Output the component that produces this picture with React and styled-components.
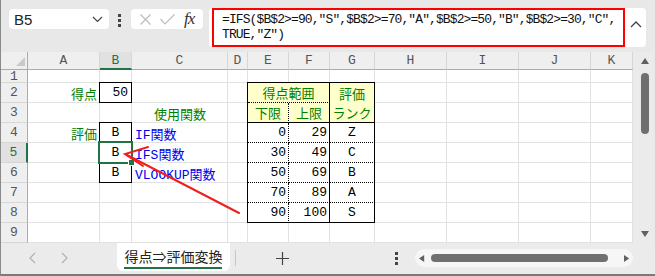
import React from "react";
import styled, { createGlobalStyle, css } from "styled-components";

const GREEN = "#008000";
const BLUE = "#0000f0";
const SEL = "#217346";

const COLS = [
  { name: "A", w: 72 },
  { name: "B", w: 32 },
  { name: "C", w: 96 },
  { name: "D", w: 20 },
  { name: "E", w: 41 },
  { name: "F", w: 41 },
  { name: "G", w: 45 },
  { name: "H", w: 72 },
  { name: "I", w: 72 },
  { name: "J", w: 72 },
  { name: "K", w: 42 },
];
const ROWS = [1, 2, 3, 4, 5, 6, 7, 8, 9];

const FORMULA_1 = '=IFS($B$2>=90,"S",$B$2>=70,"A",$B$2>=50,"B",$B$2>=30,"C",';
const FORMULA_2 = 'TRUE,"Z")';

const RANKS = [
  ["0", "29", "Z"],
  ["30", "49", "C"],
  ["50", "69", "B"],
  ["70", "89", "A"],
  ["90", "100", "S"],
];

const GlobalStyle = createGlobalStyle`
  html, body {
    margin: 0;
    padding: 0;
    background: #fff;
  }
  * {
    box-sizing: border-box;
  }
`;

const Frame = styled.div`
  position: relative;
  width: 655px;
  height: 276px;
  display: flex;
  flex-direction: column;
  background: #e8e8e8;
  border-left: 1px solid #8a8a8a;
  border-bottom: 2px solid #7a7a7a;
  font-family: "Liberation Sans", "Noto Sans CJK JP", sans-serif;
  overflow: hidden;
`;

const FormulaBar = styled.div`
  display: flex;
  align-items: flex-start;
  height: 52px;
  padding: 8px 0 0 8px;
`;

const NameBox = styled.div`
  display: flex;
  align-items: center;
  justify-content: space-between;
  width: 100px;
  height: 20px;
  margin-top: 1px;
  padding: 0 6px 0 5px;
  background: #fff;
  border-radius: 4px;
  font-size: 15px;
  color: #222;
`;

const Kebab = styled.div`
  display: flex;
  flex-direction: column;
  gap: 2px;
  margin: 6px 0 0 9px;

  span {
    width: 3px;
    height: 3px;
    background: #444;
  }
`;

const EditBox = styled.div`
  display: flex;
  align-items: center;
  gap: 9px;
  width: 72px;
  height: 20px;
  margin: 1px 0 0 10px;
  padding: 0 5px 0 9px;
  background: #fff;
  border-radius: 4px;
`;

const Fx = styled.span`
  font-family: "Liberation Serif", serif;
  font-style: italic;
  font-size: 17px;
  color: #333;
  letter-spacing: -1px;
`;

const FormulaPanel = styled.div`
  display: flex;
  align-items: flex-start;
  width: 437px;
  height: 39px;
  margin-left: 6px;
  padding-left: 3px;
  background: #fff;
  border-radius: 4px;
`;

const FormulaText = styled.div`
  width: 413px;
  height: 39px;
  padding: 2px 0 0 8px;
  border: 2px solid #ff0000;
  font-family: "Liberation Mono", monospace;
  font-size: 13px;
  letter-spacing: -0.9px;
  line-height: 15px;
  color: #111;
  white-space: pre;
`;

const Collapse = styled.div`
  margin: 6px 0 0 5px;
`;

const SheetArea = styled.div`
  display: flex;
  height: 191px;
`;

const Grid = styled.div`
  display: grid;
  grid-template-columns: 27px ${COLS.map((c) => `${c.w}px`).join(" ")};
  grid-template-rows: 18px 13px repeat(8, 20px);
  background: #fff;
  font-family: "Liberation Mono", "Noto Sans CJK JP", monospace;
  font-size: 13px;
`;

const Corner = styled.div`
  grid-column: 1;
  grid-row: 1;
  display: flex;
  align-items: flex-end;
  justify-content: flex-end;
  padding: 0 2px 3px 0;
  background: #efefef;
  border-right: 1px solid #ababab;
  border-bottom: 1px solid #ababab;
`;

const ColHead = styled.div`
  grid-column: ${(p) => p.$c};
  grid-row: 1;
  display: flex;
  align-items: center;
  justify-content: center;
  background: ${(p) => (p.$active ? "#e1e1e1" : "#efefef")};
  color: ${(p) => (p.$active ? SEL : "#555")};
  border-right: 1px solid #d6d6d6;
  border-bottom: ${(p) => (p.$active ? `2px solid ${SEL}` : "1px solid #ababab")};
  overflow: hidden;
`;

const RowHead = styled.div`
  grid-column: 1;
  grid-row: ${(p) => p.$r};
  display: flex;
  align-items: center;
  justify-content: center;
  background: ${(p) => (p.$active ? "#e1e1e1" : "#efefef")};
  color: ${(p) => (p.$active ? SEL : "#555")};
  border-bottom: 1px solid #d6d6d6;
  border-right: ${(p) => (p.$active ? `2px solid ${SEL}` : "1px solid #ababab")};
  overflow: hidden;
`;

const Cell = styled.div`
  grid-column: ${(p) => p.$c};
  grid-row: ${(p) => p.$r};
  border-right: 1px solid #e1e1e1;
  border-bottom: 1px solid #e1e1e1;
`;

const Value = styled.div`
  grid-column: ${(p) => p.$c};
  grid-row: ${(p) => p.$r};
  display: flex;
  align-items: center;
  justify-content: ${(p) =>
    p.$align === "right" ? "flex-end" : p.$align === "center" ? "center" : "flex-start"};
  padding: 0 3px;
  color: ${(p) => p.$color || "#000"};
  white-space: nowrap;
  ${(p) =>
    p.$boxed &&
    css`
      margin: -1px 0 0 -1px;
      border: 1px solid #000;
    `}
`;

const Selection = styled.div`
  position: relative;
  grid-column: ${(p) => p.$c};
  grid-row: ${(p) => p.$r};
  margin: -2px -1px -1px -2px;
  border: 2px solid ${SEL};
  display: flex;
  align-items: center;
  justify-content: center;

  &::after {
    content: "";
    position: absolute;
    right: -4px;
    bottom: -4px;
    width: 5px;
    height: 5px;
    background: ${SEL};
    border: 1px solid #fff;
  }
`;

const RangeTable = styled.div`
  grid-column: 6 / 9;
  grid-row: 3 / 10;
  display: grid;
  grid-template-columns: 41px 41px 45px;
  grid-template-rows: repeat(7, 20px);
  margin: -1px 0 0 -1px;
  border-top: 1px solid #000;
  border-left: 1px solid #000;
`;

const TCell = styled.div`
  grid-column: ${(p) => p.$span || "auto"};
  display: flex;
  align-items: center;
  justify-content: ${(p) => (p.$align === "right" ? "flex-end" : "center")};
  padding: 0 2px;
  background: ${(p) => (p.$head ? "#ffffcc" : "#fff")};
  color: ${(p) => (p.$head ? GREEN : "#000")};
  border-right: 1px ${(p) => p.$right || "solid"} #000;
  border-bottom: ${(p) => (p.$bottom === "none" ? "none" : `1px ${p.$bottom || "solid"} #000`)};
`;

const VScroll = styled.div`
  display: flex;
  flex-direction: column;
  align-items: center;
  width: 21px;
  padding: 6px 0 4px 3px;
  background: #ebebeb;
`;

const VThumb = styled.div`
  width: 8px;
  height: 61px;
  margin-top: 7px;
  border-radius: 4px;
  background: #6f6f6f;
`;

const Spacer = styled.div`
  flex: 1;
`;

const TabBar = styled.div`
  display: flex;
  align-items: flex-start;
  height: 31px;
  background: #ebebeb;
`;

const TabNav = styled.div`
  display: flex;
  align-items: center;
  gap: 21px;
  width: 116px;
  height: 30px;
  padding-left: 26px;
`;

const SheetTab = styled.div`
  position: relative;
  display: flex;
  align-items: center;
  justify-content: center;
  width: 113px;
  height: 28px;
  padding-bottom: 3px;
  background: #fff;
  border-radius: 0 0 6px 6px;
  font-family: "Noto Sans CJK JP", sans-serif;
  font-size: 14px;
  color: #222;

  &::after {
    content: "";
    position: absolute;
    left: 7px;
    right: 8px;
    bottom: 2px;
    height: 2px;
    background: ${SEL};
  }
`;

const TabDivider = styled.div`
  width: 1px;
  height: 16px;
  margin: 7px 0 0 5px;
  background: #c6c6c6;
`;

const AddSheet = styled.div`
  display: flex;
  align-items: center;
  justify-content: center;
  width: 92px;
  height: 30px;
`;

const TabKebab = styled.div`
  display: flex;
  flex-direction: column;
  justify-content: center;
  align-items: flex-end;
  gap: 2px;
  width: 87px;
  height: 30px;
  padding-right: 17px;

  span {
    width: 3px;
    height: 3px;
    background: #444;
  }
`;

const HScroll = styled.div`
  display: flex;
  align-items: center;
  width: 218px;
  height: 18px;
  margin-top: 6px;
  padding: 0 2px 0 4px;
  border-radius: 9px;
  background: #f6f6f6;
`;

const HThumb = styled.div`
  width: 179px;
  height: 8px;
  margin: 0 16px 0 5px;
  border-radius: 4px;
  background: #6f6f6f;
`;

const Overlay = styled.svg`
  position: absolute;
  top: 0;
  left: 0;
  pointer-events: none;
`;

const Tri = ({ dir, size = 8, color = "#555" }) => {
  const pts = {
    up: "0,6 4,0 8,6",
    down: "0,0 8,0 4,6",
    left: "6,0 6,8 0,4",
    right: "0,0 0,8 6,4",
  }[dir];
  return (
    <svg width={size} height={size} viewBox="0 0 8 8">
      <polygon points={pts} fill={color} />
    </svg>
  );
};

const App = () => {
  const colStart = (i) => i + 2;
  const rowLine = (r) => r + 1;

  return (
    <>
      <GlobalStyle />
      <Frame>
        <FormulaBar>
          <NameBox>
            <span>B5</span>
            <svg width="11" height="7" viewBox="0 0 11 7">
              <polyline points="1,1 5.5,5.5 10,1" fill="none" stroke="#444" strokeWidth="1.2" />
            </svg>
          </NameBox>
          <Kebab>
            <span />
            <span />
            <span />
          </Kebab>
          <EditBox>
            <svg width="11" height="11" viewBox="0 0 11 11">
              <path d="M0.5 0.5 L10.5 10.5 M10.5 0.5 L0.5 10.5" stroke="#bdbdbd" strokeWidth="1.2" />
            </svg>
            <svg width="15" height="11" viewBox="0 0 15 11">
              <polyline points="0.5,5 5,10 14.5,0.5" fill="none" stroke="#bdbdbd" strokeWidth="1.2" />
            </svg>
            <Fx>fx</Fx>
          </EditBox>
          <FormulaPanel>
            <FormulaText>
              {FORMULA_1}
              {"\n"}
              {FORMULA_2}
            </FormulaText>
            <Collapse>
              <svg width="12" height="7" viewBox="0 0 12 7">
                <polyline points="1,6 6,1 11,6" fill="none" stroke="#444" strokeWidth="1.3" />
              </svg>
            </Collapse>
          </FormulaPanel>
        </FormulaBar>

        <SheetArea>
          <Grid>
            <Corner>
              <svg width="9" height="9" viewBox="0 0 9 9">
                <polygon points="9,0 9,9 0,9" fill="#c9c9c9" />
              </svg>
            </Corner>
            {COLS.map((c, i) => (
              <ColHead key={c.name} $c={colStart(i)} $active={c.name === "B"}>
                {c.name}
              </ColHead>
            ))}
            {ROWS.map((r) => (
              <RowHead key={r} $r={rowLine(r)} $active={r === 5}>
                {r}
              </RowHead>
            ))}
            {ROWS.map((r) =>
              COLS.map((c, i) => <Cell key={`${c.name}${r}`} $c={colStart(i)} $r={rowLine(r)} />)
            )}

            <Value $c={2} $r={3} $align="right" $color={GREEN}>得点</Value>
            <Value $c={3} $r={3} $align="right" $boxed>50</Value>
            <Value $c={4} $r={4} $align="center" $color={GREEN}>使用関数</Value>
            <Value $c={2} $r={5} $align="right" $color={GREEN}>評価</Value>
            <Value $c={3} $r={5} $align="center" $boxed>B</Value>
            <Value $c={3} $r={7} $align="center" $boxed>B</Value>
            <Selection $c={3} $r={6}>B</Selection>
            <Value $c={4} $r={5} $color={BLUE}>IF関数</Value>
            <Value $c={4} $r={6} $color={BLUE}>IFS関数</Value>
            <Value $c={4} $r={7} $color={BLUE}>VLOOKUP関数</Value>

            <RangeTable>
              <TCell $head $span="span 2" $bottom="dotted">得点範囲</TCell>
              <TCell $head $bottom="none">評価</TCell>
              <TCell $head $right="dotted">下限</TCell>
              <TCell $head>上限</TCell>
              <TCell $head>ランク</TCell>
              {RANKS.map(([lo, hi, rank], i) => {
                const bottom = i === RANKS.length - 1 ? "solid" : "dotted";
                return (
                  <React.Fragment key={rank}>
                    <TCell $align="right" $right="dotted" $bottom={bottom}>{lo}</TCell>
                    <TCell $align="right" $bottom={bottom}>{hi}</TCell>
                    <TCell $bottom={bottom}>{rank}</TCell>
                  </React.Fragment>
                );
              })}
            </RangeTable>
          </Grid>

          <VScroll>
            <Tri dir="up" color="#606060" />
            <VThumb />
            <Spacer />
            <Tri dir="down" color="#606060" />
          </VScroll>
        </SheetArea>

        <TabBar>
          <TabNav>
            <svg width="11" height="12" viewBox="0 0 11 12">
              <polyline points="8,1 3,6 8,11" fill="none" stroke="#b0b0b0" strokeWidth="1.2" />
            </svg>
            <svg width="11" height="12" viewBox="0 0 11 12">
              <polyline points="3,1 8,6 3,11" fill="none" stroke="#b0b0b0" strokeWidth="1.2" />
            </svg>
          </TabNav>
          <SheetTab>得点⇒評価変換</SheetTab>
          <TabDivider />
          <AddSheet>
            <svg width="13" height="13" viewBox="0 0 13 13">
              <path d="M6.5 0 V13 M0 6.5 H13" stroke="#444" strokeWidth="1.2" />
            </svg>
          </AddSheet>
          <TabKebab>
            <span />
            <span />
            <span />
          </TabKebab>
          <HScroll>
            <Tri dir="left" size={7} color="#606060" />
            <HThumb />
            <Tri dir="right" size={7} color="#606060" />
          </HScroll>
        </TabBar>

        <Overlay width="655" height="276" viewBox="0 0 655 276">
          <g stroke="#f01e1e" strokeWidth="2" strokeLinecap="round" fill="none">
            <line x1="238" y1="213" x2="126" y2="155" />
            <polyline points="147,147 124,154 142,166" />
          </g>
        </Overlay>
      </Frame>
    </>
  );
};

export default App;
